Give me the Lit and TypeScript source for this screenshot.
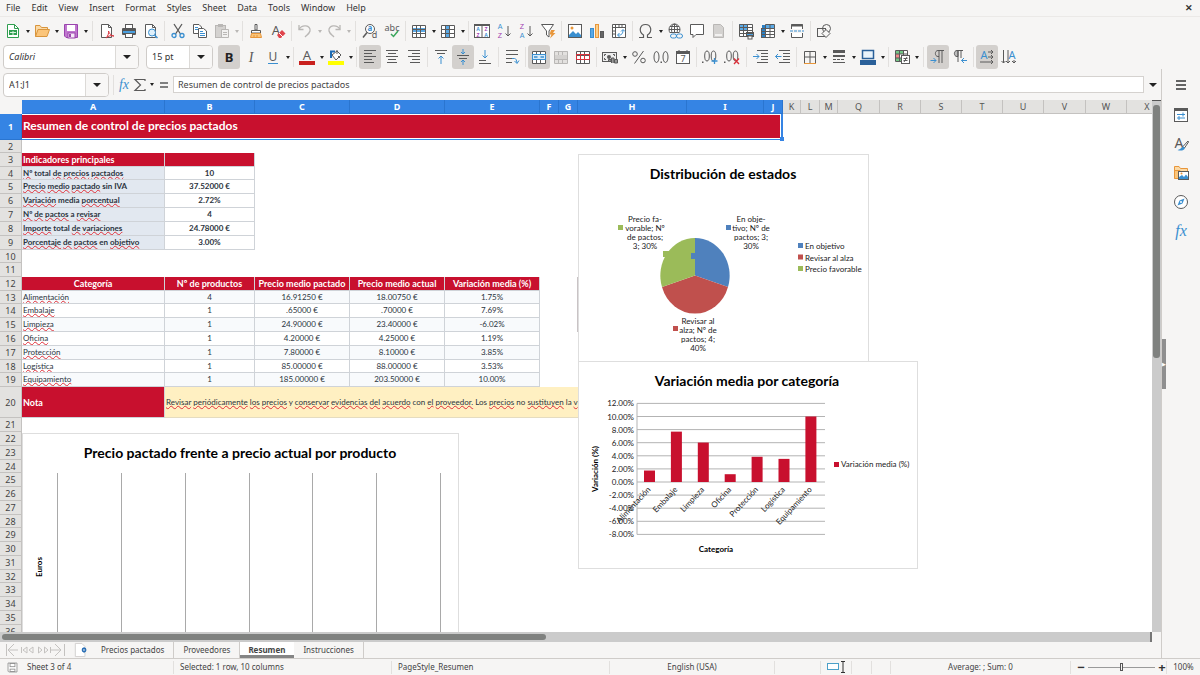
import { LitElement, html, svg, css, nothing } from "lit";
import { customElement } from "lit/decorators.js";
import { classMap } from "lit/directives/class-map.js";

const G = "#5a5a5a";
const B = "#3a8fd0";
const R = "#d9303a";
const P = "#a040b0";
const O = "#e8963a";
const L = "#b9b7b5";

const lines = (ys: number[][], color = G) =>
  ys.map(([x1, x2, y]) => svg`<path d="M${x1} ${y}H${x2}" stroke=${color} />`);

const gridBox = (c = G) => svg`<path d="M1.500 2.500H14.500V14.500H1.500ZM1.500 6.500H14.500M1.500 10.500H14.500M5.500 2.500V14.500M9.500 2.500V14.500" stroke=${c} />`;

const glyph = (t: string, x: number, y: number, size: number, color: string, weight = 400) =>
  svg`<text x=${x} y=${y} font-size=${size} font-weight=${weight} fill=${color} text-anchor="middle">${t}</text>`;

const icons: Record<string, unknown> = {
  new: svg`<path d="M2.500 1.500H9.500L13.500 5.500V14.500H2.500Z" fill="#fff" stroke="#2f9e4f"/><path d="M9.500 1.500V5.500H13.500" stroke="#2f9e4f"/><rect x="4" y="7" width="8" height="5" fill="#2f9e4f"/><path d="M5 9.500H11M8 8V12" stroke="#d5f0dc"/>`,
  open: svg`<path d="M1.500 13.500V2.500H6L7.500 4.500H13.500V6.500" fill="#fbd9a5" stroke="#d9953c"/><path d="M1.500 13.500L4 6.500H15.500L13 13.500Z" fill="#fbc57a" stroke="#d9953c"/>`,
  save: svg`<path d="M1.500 1.500H14.500V14.500H3L1.500 13Z" fill="#c077cf" stroke="#9a44ad"/><rect x="4" y="2" width="8" height="6" fill="#fff"/><rect x="5" y="10" width="7" height="5" fill="#f6e9f8" stroke="#9a44ad"/><rect x="6" y="11" width="2" height="3" fill="#9a44ad"/>`,
  pdf: svg`<path d="M2.500 1.500H9.500L12.500 4.500V14.500H2.500Z" fill="#fff" stroke=${G}/><path d="M9.500 1.500V4.500H12.500" stroke=${G}/><path d="M7 15C9 13 10 10 9.500 8C11 12 13 13 15 13C12 12 9 13 7 15Z" fill="#fff" stroke=${R}/>`,
  print: svg`<rect x="4.500" y="1.500" width="7" height="4" fill="#fff" stroke=${G}/><rect x="1" y="5" width="14" height="7" rx="1" fill="#565656"/><rect x="2" y="8" width="12" height="2" fill="#4ba0df"/><rect x="4.500" y="10.500" width="7" height="4" fill="#fff" stroke=${G}/>`,
  preview: svg`<path d="M2.500 1.500H9.500L12.500 4.500V14.500H2.500Z" fill="#fff" stroke=${G}/><path d="M9.500 1.500V4.500H12.500" stroke=${G}/><circle cx="9" cy="9.500" r="3.500" fill="#dff0fb" stroke=${B}/><path d="M11.500 12L14.500 15" stroke=${B} stroke-width="1.500"/>`,
  cut: svg`<path d="M4 1L10.500 11M12 1L5.500 11" stroke=${G} stroke-width="1.300"/><circle cx="4" cy="12.500" r="2" stroke=${B} stroke-width="1.300"/><circle cx="12" cy="12.500" r="2" stroke=${B} stroke-width="1.300"/>`,
  copy: svg`<path d="M1.500 1.500H7L9.500 4V10.500H1.500Z" fill="#fff" stroke=${G}/><path d="M3 4.500H6M3 6.500H6" stroke=${B}/><path d="M6.500 5.500H11.500L14.500 8V14.500H6.500Z" fill="#fff" stroke=${G}/><path d="M8 8.500H11M8 10.500H13M8 12.500H13" stroke=${B}/>`,
  paste: svg`<rect x="1.500" y="2.500" width="10" height="12" fill="#d4d2d0" stroke=${L}/><rect x="4" y="1" width="5" height="3" fill=${L}/><path d="M7.500 6.500H14.500V14.500H7.500Z" fill="#f2f1f0" stroke=${L}/><path d="M9 9.500H13M9 11.500H13" stroke=${L}/>`,
  brush: svg`<path d="M7 1.500H9V7H7Z" fill="#fff" stroke=${G}/><path d="M3.500 7.500H12.500V10H3.500Z" fill="#fff" stroke=${G}/><path d="M3.500 10.500H12.500L13.500 14.500H2.500Z" fill="#fbc57a" stroke=${O}/><path d="M6 12V14M9 12V14" stroke=${O}/>`,
  clear: svg`${glyph("A", 6, 12, 13, G)}<path d="M7 12L12 7L15.500 10.500L11 15H9Z" fill="#e0454d"/><path d="M9 10L13 14" stroke="#fff"/>`,
  undo: svg`<path d="M2 2V6.500H6.500" stroke=${L} stroke-width="1.300"/><path d="M2 6.500C5 1 14 2 13 8C12.500 10.500 10 12 8 14" stroke=${L} stroke-width="1.300"/>`,
  redo: svg`<path d="M14 2V6.500H9.500" stroke=${L} stroke-width="1.300"/><path d="M14 6.500C11 1 2 2 3 8C3.500 10.500 6 12 8 14" stroke=${L} stroke-width="1.300"/>`,
  find: svg`<circle cx="8" cy="6" r="4.500" fill="#fff" stroke=${G}/><path d="M5 9.500L1 14.500" stroke=${G} stroke-width="1.500"/>${glyph("a", 8, 8, 8, B, 700)}${glyph("d", 12.5, 15, 9, G)}`,
  spell: svg`${glyph("abc", 8, 8, 9, G)}<path d="M7 11L9.500 13.500L14 8" stroke="#3aa65c" stroke-width="1.500"/>`,
  row: svg`<rect x="1" y="2" width="14" height="12" fill="#fff"/><rect x="1" y="5" width="14" height="4" fill="#5aa9e6"/>${gridBox()}`,
  col: svg`<rect x="1" y="2" width="14" height="12" fill="#fff"/><rect x="5" y="2" width="5" height="13" fill="#5aa9e6"/>${gridBox()}`,
  sort: svg`<rect x="0.500" y="1.500" width="15" height="13" fill="#fff" stroke=${G}/><path d="M0 2H16" stroke=${G} stroke-width="2"/><path d="M8 2V15" stroke=${G}/><g class="letters">${glyph("A", 4, 8, 5, B, 700)}${glyph("Z", 4, 14, 5, P, 700)}${glyph("Z", 12, 8, 5, P, 700)}${glyph("A", 12, 14, 5, B, 700)}</g>`,
  az: svg`<g class="letters">${glyph("A", 4, 6, 7, B)}${glyph("Z", 4, 15, 7, P)}</g><path d="M12 3V13M9.500 10.500L12 13L14.500 10.500" stroke=${G}/>`,
  za: svg`<g class="letters">${glyph("Z", 4, 6, 7, P)}${glyph("A", 4, 15, 7, B)}</g><path d="M12 3V13M9.500 10.500L12 13L14.500 10.500" stroke=${G}/>`,
  filter: svg`<path d="M1.500 1.500H13.500L9 8V14L6.500 12V8Z" fill="#fff" stroke=${G}/><path d="M11 7H15L13 10H15.500L10 15.500L11.500 11.500H9.500Z" fill=${O}/>`,
  image: svg`<rect x="1.500" y="1.500" width="13" height="13" fill="#fff" stroke=${G}/><path d="M2 14V12L6 8L9 11L11 9L14 12V14Z" fill="#3a8fd0"/><circle cx="5" cy="5" r="1.500" fill=${O}/>`,
  chart: svg`<rect x="1.500" y="5.500" width="3" height="9" fill="#5aa9e6" stroke=${B}/><rect x="6.500" y="1.500" width="3" height="13" fill="#fbd08c" stroke=${O}/><rect x="11.500" y="8.500" width="3" height="6" fill="#666" stroke=${G}/>`,
  pivot: svg`<path d="M1.500 1.500H14.500V14.500H1.500ZM1.500 4.500H14.500M4.500 1.500V14.500M8 1.500V4.500M11 1.500V4.500M1.500 8H4.500M1.500 11H4.500" fill="#fff" stroke=${G}/><path d="M7 12C11 12.500 12 10 12 7M10 8.500L12 6.500L14 8.500M8.500 10L6.500 12L8.500 14" stroke=${B}/>`,
  omega: svg`<path d="M1 14.500H5.500V12C0 8.500 2 1.500 7.500 1.500S15 8.500 9.500 12V14.500H14" stroke=${G} stroke-width="1.200"/>`,
  link: svg`<circle cx="7.500" cy="6.500" r="5.500" stroke=${G} fill="#fff"/><path d="M2 6.500H13M7.500 1V12M3 3.500H12M3 9.500H12" stroke=${G}/><ellipse cx="7.500" cy="6.500" rx="3" ry="5.500" stroke=${G}/><rect x="3" y="10" width="13" height="6" fill="#f6f5f4"/><rect x="3.500" y="11" width="6" height="4" rx="2" stroke=${B}/><rect x="9.500" y="11" width="6" height="4" rx="2" stroke=${B}/>`,
  comment: svg`<path d="M1.500 1.500H14.500V11.500H7L4 14.500V11.500H1.500Z" fill="#fff" stroke=${G}/>`,
  header: svg`<path d="M2.500 1.500H9.500L12.500 4.500V14.500H2.500Z" fill="#d4d2d0" stroke=${L}/><rect x="4" y="11" width="7" height="2" fill="#f2f1f0"/>`,
  area: svg`<rect x="1" y="1" width="13" height="12" fill="#fff"/><rect x="1" y="1" width="9" height="7" fill="#5aa9e6"/><path d="M1.500 1.500H14.500V13.500H1.500ZM1.500 4.500H14.500M1.500 7.500H14.500M1.500 10.500H14.500M5.500 1.500V13.500M9.500 1.500V13.500" stroke=${G}/><rect x="8" y="9" width="8" height="5" fill="#565656"/><rect x="9" y="11" width="6" height="1" fill="#4ba0df"/><rect x="10" y="13" width="4" height="3" fill="#fff" stroke=${G}/>`,
  freeze: svg`<rect x="2" y="2" width="13" height="13" fill="#fff"/><rect x="2" y="2" width="13" height="4" fill="#5aa9e6"/><rect x="2" y="2" width="4" height="13" fill="#2a7fc4"/><path d="M1.500 5.500H14.500V14.500M5.500 1.500H14.500V5.500M1.500 8.500H14.500M1.500 11.500H14.500M1.500 14.500H14.500M5.500 1.500V14.500M10 1.500V14.500M1.500 5V15" stroke=${G}/>`,
  split: svg`<path d="M2.500 6V1.500H13.500V6M2.500 10V14.500H13.500V10" fill="#fff" stroke=${G}/><path d="M2 2.500H14" stroke=${G} stroke-width="2"/><path d="M1 8H15" stroke=${B} stroke-dasharray="3 1"/>`,
  shapes: svg`<rect x="1.500" y="5.500" width="8" height="8" fill="#f6f5f4" stroke=${G}/><circle cx="10.500" cy="5.500" r="4" stroke=${G}/><path d="M10 6.500L14 10.500L10 14.500L6 10.500Z" fill="#f6f5f4" stroke=${G}/>`,
  bold: glyph("B", 8, 13, 13, "#222", 700),
  italic: svg`<text class="serif" x="8" y="13" font-size="14" font-style="italic" fill=${G} text-anchor="middle">I</text>`,
  underline: svg`${glyph("U", 8, 12, 12, G)}<path d="M3 14.500H13" stroke=${B}/>`,
  fontcolor: svg`${glyph("A", 8, 11, 13, G)}<rect x="0" y="12" width="16" height="4" fill="#c9211e"/>`,
  fill: svg`<path d="M4 6L9 2L13 6L8 11Z" fill="#fff" stroke=${G}/><path d="M9 5V1M10 7L12 9" stroke=${G}/><path d="M3 2V9M2 2.500H7" stroke="#1f6db5" stroke-width="2"/><rect x="0" y="12" width="16" height="4" fill="#ffff00"/>`,
  left: lines([[2, 14, 1.5], [2, 10, 4.5], [2, 14, 7.5], [2, 10, 10.5], [2, 12, 13.5]]),
  center: lines([[2, 14, 1.5], [4, 12, 4.5], [2, 14, 7.5], [4, 12, 10.5], [3, 13, 13.5]]),
  right: lines([[2, 14, 1.5], [6, 14, 4.5], [2, 14, 7.5], [6, 14, 10.5], [4, 14, 13.5]]),
  top: svg`${lines([[2, 14, 1.5], [4, 12, 4.5]])}<path d="M8 15V7M5.500 9.500L8 7L10.500 9.500" stroke=${B}/>`,
  middle: svg`${lines([[2, 14, 6.5], [4, 12, 9.5]])}<path d="M8 0V5M6 3L8 5L10 3M8 16V11M6 13L8 11L10 13" stroke=${B}/>`,
  bottom: svg`${lines([[2, 9, 11.5], [2, 14, 14.5]])}<path d="M8 1V9M5.500 6.500L8 9L10.500 6.500" stroke=${B}/>`,
  wrap: svg`${lines([[2, 14, 1.5], [2, 14, 5.5], [2, 8, 9.5], [2, 8, 13.5]])}<path d="M8 9.500H10.500C12 9.500 12.500 11 13 14M10.500 12L13 14.500L15 11.500" stroke=${B}/>`,
  merge: svg`<rect x="1" y="2" width="14" height="12" fill="#fff"/>${gridBox()}<rect x="1.500" y="5.500" width="13" height="5" fill="#d7ebf9" stroke=${B}/><path d="M3 8H6.500M13 8H9.500" stroke=${B} stroke-width="1.500"/>`,
  merge2: svg`<rect x="1" y="2" width="14" height="12" fill="#e3e1df"/>${gridBox(L)}<rect x="2" y="6" width="12" height="4" fill="#d4d2d0"/>`,
  unmerge: svg`<rect x="1" y="2" width="14" height="12" fill="#fff"/>${gridBox()}<path d="M1.500 5.500H14.500V10.500H1.500ZM5.500 5.500V10.500M9.500 5.500V10.500" stroke=${R}/>`,
  currency: svg`<rect x="0.500" y="3.500" width="14" height="9" fill="#eee" stroke=${G}/><circle cx="7" cy="8" r="2" fill=${G}/><path d="M2.500 7V5.500H4M2.500 9V10.500H4M11 5.500H12.500V7" stroke=${G}/><path d="M6.500 12V10.500H9V12M9.500 14V9H12V14M12.500 14V10.500H15.500V14Z" fill="#999" stroke=${G}/>`,
  percent: svg`<circle cx="4" cy="5" r="2.300" stroke=${G}/><circle cx="12" cy="11.500" r="2.300" stroke=${G}/><path d="M12.500 2L3.500 14.500" stroke=${G}/>`,
  number: svg`<ellipse cx="3.500" cy="8" rx="2.500" ry="5.500" stroke=${G}/><ellipse cx="12.500" cy="8" rx="2.500" ry="5.500" stroke=${G}/><rect x="7.500" y="12.500" width="1.500" height="1.500" fill=${G}/>`,
  date: svg`<rect x="1.500" y="2.500" width="13" height="12" fill="#fff" stroke=${G}/><path d="M1 4H15" stroke=${G} stroke-width="2"/><path d="M4 1V3M12 1V3" stroke=${G}/>${glyph("7", 8, 13, 9, G)}`,
  addDec: svg`<rect x="0" y="12.500" width="1.500" height="1.500" fill=${G}/><ellipse cx="5" cy="7" rx="2.300" ry="5" stroke=${G}/><ellipse cx="11.500" cy="7" rx="2.300" ry="5" stroke=${G}/><path d="M9.500 12H15.500M12.500 9V15" stroke=${B} stroke-width="1.300"/>`,
  delDec: svg`<rect x="0" y="12.500" width="1.500" height="1.500" fill=${G}/><ellipse cx="5" cy="7" rx="2.300" ry="5" stroke=${G}/><ellipse cx="11.500" cy="7" rx="2.300" ry="5" stroke=${G}/><path d="M10 9.500L15 15M15 9.500L10 15" stroke=${R} stroke-width="1.300"/>`,
  indent: svg`${lines([[4, 15, 1.5], [8, 15, 4.5], [8, 15, 7.5], [8, 15, 10.5], [4, 15, 13.5]])}<path d="M0 7.500H6M3.500 5L6 7.500L3.500 10" stroke=${B}/>`,
  outdent: svg`${lines([[4, 15, 1.5], [8, 15, 4.5], [8, 15, 7.5], [8, 15, 10.5], [4, 15, 13.5]])}<path d="M0.500 7.500H6.500M3 5L0.500 7.500L3 10" stroke=${B}/>`,
  borders: svg`<path d="M2.500 14V2.500H13.500V14M8 2.500V14M2.500 8H13.500" stroke=${G}/><path d="M2 14.500H14" stroke=${O}/>`,
  linestyle: svg`<path d="M2 2.500H14" stroke=${G} stroke-width="3"/><path d="M2 7H14" stroke=${G} stroke-width="2"/><path d="M2 10.500H14" stroke=${G} stroke-dasharray="3 1"/><path d="M2 13.500H14" stroke=${G}/>`,
  bordercolor: svg`<rect x="2.500" y="1.500" width="11" height="8" fill="#e9f3fb" stroke="#2a6099" stroke-width="1.500"/><rect x="0" y="11" width="16" height="5" fill="#2a6099"/>`,
  cond: svg`<rect x="1" y="1" width="13" height="12" fill="#fff"/><rect x="2" y="2" width="8" height="3" fill="#74c686"/><rect x="2" y="5" width="4" height="4" fill="#ef8a8a"/><rect x="2" y="9" width="5" height="4" fill="#74c686"/><path d="M1.500 1.500H13.500V6M1.500 1.500V12.500H7M1.500 5H13.500M1.500 9H7M5.500 1.500V12.500M9.500 1.500V6" stroke=${G}/><rect x="7.500" y="6.500" width="8" height="8" fill="#fff" stroke=${G}/><path d="M9.500 9.500H13.500M9.500 11.500H13.500M13 8L10 13" stroke=${G}/>`,
  ltr: svg`<path d="M14 1.500H8C4.500 1.500 4.500 7.500 8 7.500H9M9 1.500V14M12 1.500V14" stroke=${G}/><path d="M0.500 11.500H6M3.500 9L6 11.500L3.500 14" stroke=${B}/>`,
  rtl: svg`<path d="M11 1.500H5C1.500 1.500 1.500 7.500 5 7.500H6V1.500" fill="#bbb" stroke=${G}/><path d="M6 1.500V13M9 1.500V9" stroke=${G}/><path d="M9.500 11.500H15M12 9L9.500 11.500L12 14" stroke=${B}/>`,
  horiz: svg`${glyph("A", 5, 10, 11, B)}<path d="M9 3H14M12 1L14 3L12 5M9 8H14M12 6L14 8L12 10M1 13H14M12 11L14 13L12 15" stroke=${G}/>`,
  vert: svg`${glyph("A", 11, 10, 11, B)}<path d="M2.500 1V14M0.500 12L2.500 14L4.500 12M7 1V14M5 12L7 14L9 12M13 11V14M11 12L13 14L15 12" stroke=${G}/>`,
  fx: svg`<text class="serif" x="8" y="12" font-size="14" font-style="italic" fill=${B} text-anchor="middle">fx</text>`,
  sum: svg`<path d="M13 4V2.500H3L8.500 8L3 13.500H13V12" stroke=${G} stroke-width="1.200"/>`,
  equals: svg`<path d="M4 6H12M4 10H12" stroke=${G} stroke-width="1.500"/>`,
  burger: svg`<path d="M3 4H13M3 8H13M3 12H13" stroke="#333" stroke-width="1.500"/>`,
  props: svg`<rect x="1.500" y="1.500" width="13" height="13" fill="#fff" stroke=${G}/><path d="M1 3H15" stroke=${G} stroke-width="2"/><path d="M4 7.500H12M10 5.500V9.500M4 11H12M6 9V13" stroke=${B}/>`,
  styles: svg`${glyph("A", 6, 12, 14, G)}<path d="M15 5L10 10.500L11.500 12L15.500 6Z" fill="#fff" stroke=${G}/><path d="M10 10.500L12 12C11 15 7 15 4.500 14C7 14 8 11.500 10 10.500Z" fill=${B}/>`,
  gallery: svg`<path d="M1.500 13.500V1.500H6L7.500 3.500H14.500V6" fill="#fbd9a5" stroke=${O}/><path d="M1.500 13.500V5.500H7V13.500Z" fill="#fbc57a" stroke=${O}/><rect x="5.500" y="6.500" width="10" height="8" fill="#fff" stroke=${G}/><path d="M6 14V12L9 10L11 12L13 9.500L15 12V14Z" fill=${B}/><circle cx="8.500" cy="8.500" r="1" fill=${O}/>`,
  navigator: svg`<circle cx="8" cy="8" r="6.500" fill="#fff" stroke=${G}/><path d="M11.500 4.500L9.500 9.500L4.500 11.500L6.500 6.500Z" fill="#3a8fd0"/><circle cx="8" cy="8" r="1" fill="#fff"/>`,
  functions: svg`<text class="serif" x="8" y="13" font-size="16" font-style="italic" fill=${B} text-anchor="middle">fx</text>`,
  disk: svg`<path d="M2.500 2.500H13.500V13.500H3.500L2.500 12.500Z" fill="#fff" stroke="#8a8a8a"/><rect x="5" y="3" width="6" height="4" stroke="#8a8a8a"/><rect x="5" y="10" width="6" height="3" stroke="#8a8a8a"/>`,
  addSheet: svg`<path d="M1.500 0.500H9L12.500 4V15.500H1.500Z" fill="#fff" stroke="#cfcdcb"/><circle cx="11.500" cy="8" r="2" fill="#fff" stroke="#2a6fb5" stroke-width="1.500"/><path d="M11.500 5V11" stroke="#2a6fb5"/>`,
};

const icon = (name: string) =>
  html`<svg class="icon" viewBox="0 0 16 16" fill="none" aria-hidden="true">${icons[name]}</svg>`;

/* A tool entry is [icon, label, flags]; flags: d = has a drop-down, a = pressed, x = disabled. */
type Tool = [string, string, string?];
const mainTools: Tool[] = [
  ["new", "New", "d"], ["open", "Open", "d"], ["save", "Save", "d"], ["|", "wide"],
  ["pdf", "Export as PDF"], ["print", "Print"], ["preview", "Print preview"], ["|", ""],
  ["cut", "Cut"], ["copy", "Copy"], ["paste", "Paste", "dx"], ["|", ""],
  ["brush", "Clone formatting"], ["clear", "Clear formatting"], ["|", ""],
  ["undo", "Undo", "dx"], ["redo", "Redo", "dx"], ["|", "wide"],
  ["find", "Find and replace"], ["spell", "Spelling"], ["|", ""],
  ["row", "Row", "d"], ["col", "Column", "d"], ["|", ""],
  ["sort", "Sort"], ["az", "Sort ascending"], ["za", "Sort descending"], ["filter", "AutoFilter"], ["|", ""],
  ["image", "Insert image"], ["chart", "Insert chart"], ["pivot", "Pivot table"], ["|", ""],
  ["omega", "Special character", "d"], ["link", "Hyperlink"], ["comment", "Comment"], ["header", "Headers and footers", "x"], ["|", ""],
  ["area", "Print area"], ["freeze", "Freeze rows and columns", "d"], ["split", "Split window"], ["|", ""],
  ["shapes", "Draw functions"],
];
const formatTools: Tool[] = [
  ["bold", "Bold", "a"], ["italic", "Italic"], ["underline", "Underline", "d"], ["|", ""],
  ["fontcolor", "Font color", "d"], ["fill", "Background color", "d"], ["|", ""],
  ["left", "Align left", "a"], ["center", "Center"], ["right", "Align right"], ["|", ""],
  ["top", "Align top"], ["middle", "Center vertically", "a"], ["bottom", "Align bottom"], ["|", ""],
  ["wrap", "Wrap text"], ["|", ""],
  ["merge", "Merge and center", "a"], ["merge2", "Merge cells", "x"], ["unmerge", "Unmerge cells"], ["|", ""],
  ["currency", "Currency", "d"], ["percent", "Percent"], ["number", "Number"], ["date", "Date"], ["|", ""],
  ["addDec", "Add decimal place"], ["delDec", "Delete decimal place"], ["|", "wide"],
  ["indent", "Increase indent"], ["outdent", "Decrease indent"], ["|", ""],
  ["borders", "Borders", "d"], ["linestyle", "Border style", "d"], ["bordercolor", "Border color", "d"], ["|", ""],
  ["cond", "Conditional formatting", "d"], ["|", "wide"],
  ["ltr", "Left-to-right", "a"], ["rtl", "Right-to-left"], ["|", ""],
  ["horiz", "Text direction horizontal", "a"], ["vert", "Text direction vertical"],
];

const columns: [string, number][] = [
  ["A", 143], ["B", 90], ["C", 95], ["D", 95], ["E", 95], ["F", 19], ["G", 19], ["H", 109], ["I", 77], ["J", 19],
  ["K", 18], ["L", 19], ["M", 18], ["Q", 42], ["R", 41], ["S", 41], ["T", 41], ["U", 41], ["V", 42], ["W", 41], ["X", 41],
];
const rowHeights = [
  26, 13, 14, 13, 14, 14, 14, 14, 14, 13, 14, 14, 13, 14, 14, 14, 14, 13,
  14, 31, 14, 14, 14, 13, 14, 14, 14, 13, 14, 14, 14, 13, 14, 14, 14, 14,
];

/* Words between underscores carry the spelling mark. */
const indicators: [string, string][] = [
  ["_Nº_ total _de_ _precios_ _pactados_", "10"],
  ["_Precio_ _medio_ _pactado_ sin IVA", "37.52000 €"],
  ["_Variación_ media _porcentual_", "2.72%"],
  ["_Nº_ _de_ _pactos_ a _revisar_", "4"],
  ["_Importe_ total _de_ _variaciones_", "24.78000 €"],
  ["_Porcentaje_ _de_ _pactos_ en _objetivo_", "3.00%"],
];
const categoryHead = ["Categoría", "Nº de productos", "Precio medio pactado", "Precio medio actual", "Variación media (%)"];
const categories: [string, string, string, string, string][] = [
  ["Alimentación", "4", "16.91250 €", "18.00750 €", "1.75%"],
  ["Embalaje", "1", ".65000 €", ".70000 €", "7.69%"],
  ["Limpieza", "1", "24.90000 €", "23.40000 €", "-6.02%"],
  ["Oficina", "1", "4.20000 €", "4.25000 €", "1.19%"],
  ["Protección", "1", "7.80000 €", "8.10000 €", "3.85%"],
  ["Logística", "1", "85.00000 €", "88.00000 €", "3.53%"],
  ["Equipamiento", "1", "185.00000 €", "203.50000 €", "10.00%"],
];
const note =
  "_Revisar_ _periódicamente_ _los_ _precios_ y _conservar_ _evidencias_ _del_ _acuerdo_ con _el_ _proveedor._ Los _precios_ no _sustituyen_ la _v_";

const spelled = (text: string) =>
  text.split("_").map((part, i) => (i % 2 ? html`<span class="typo">${part}</span>` : part));

@customElement("app-root")
export class AppRoot extends LitElement {
  static styles = css`
    :host {
      display: flex;
      flex-direction: column;
      height: 100vh;
      overflow: hidden;
      background: #f6f5f4;
      color: #333;
      font: 9px/12px "Noto Sans", "Open Sans", sans-serif;
    }
    * { box-sizing: border-box; }
    button, input {
      font: inherit;
      color: inherit;
      border: 0;
      background: none;
      padding: 0;
      margin: 0;
      min-width: 0;
    }
    figure { margin: 0; }
    .icon { width: 16px; height: 16px; display: block; overflow: visible; }
    .icon text { font-family: "Noto Sans", sans-serif; }
    .icon .letters text { font-family: "Liberation Sans", sans-serif; }
    .icon text.serif { font-family: "Liberation Serif", serif; }
    .menubar { display: flex; align-items: center; gap: 1px; height: 17px; border-bottom: 1px solid #ebe9e7; padding: 0 7px 0 1px; }
    .menubar button { padding: 0 5px; line-height: 16px; }
    .menubar .close { margin-left: auto; padding: 0; font-size: 9px; font-weight: 700; }
    .bar { display: flex; align-items: center; flex: none; }
    .bar.main { height: 28px; padding-left: 2px; }
    .bar.format { height: 24px; padding-left: 3px; }
    .tool { display: flex; align-items: center; justify-content: center; width: 22px; height: 24px; border-radius: 3px; flex: none; }
    .tool.on { background: #d3d0cd; }
    .caret { display: flex; align-items: center; justify-content: center; width: 7px; height: 20px; flex: none; }
    .caret::after, .drop::after { content: ""; border: 2px solid transparent; border-top: 3px solid #222; border-bottom: 0; }
    .caret.off::after { border-top-color: #b9b7b5; }
    .sep { width: 1px; height: 20px; background: #e2e0de; margin: 0 2px; flex: none; }
    .sep.wide { margin: 0 3px; }
    .combo { display: flex; height: 24px; border: 1px solid #cfccc9; border-radius: 4px; background: #fff; flex: none; overflow: hidden; }
    .combo input { flex: 1; padding-left: 5px; }
    .combo .drop { width: 23px; border-left: 1px solid #dcdad7; background: #f8f7f6; }
    .drop { display: flex; align-items: center; justify-content: center; }
    .drop::after { border-width: 4px 4px 0 4px; }
    .fontname { width: 136px; margin-right: 7px; }
    .fontname input { font-style: italic; }
    .fontsize { width: 67px; margin-right: 5px; }
    .cellname { width: 106px; }
    .body { display: flex; flex: 1; min-height: 0; }
    .work { display: flex; flex-direction: column; flex: 1; min-width: 0; }
    .formula { display: flex; align-items: center; height: 31px; padding-left: 3px; flex: none; }
    .formula .tool { width: 16px; }
    .formula .sep { margin: 0 2px 0 4px; }
    .formula .caret { width: 6px; margin-left: 1px; }
    .formula .eq { width: 18px; }
    .line { flex: 1; height: 17px; border: 1px solid #d5d2cf; background: #fff; padding-left: 4px; color: #444; }
    .formula .expand { width: 17px; height: 20px; }
    .view { display: flex; flex: 1; min-height: 0; }
    .sheet { position: relative; flex: 1; min-width: 0; overflow: hidden; background: #fff; }
    table { width: 0; table-layout: fixed; border-collapse: separate; border-spacing: 0; }
    th, td { padding: 0; overflow: hidden; white-space: nowrap; font-weight: 400; line-height: 11px; }
    thead th { height: 14px; background: #e3e2e0; border-right: 1px solid #c4c2c0; border-bottom: 1px solid #c4c2c0; color: #555; }
    thead th.corner { background: #f6f5f4; border-color: #f6f5f4; }
    thead th.sel, tbody th.sel { background: #3584e4; color: #fff; font-weight: 700; border-color: #2a75d0; }
    tbody th { background: #e3e2e0; border-right: 1px solid #c4c2c0; border-bottom: 1px solid #c4c2c0; color: #444; }
    td { font-family: Lato, sans-serif; font-size: 8px; text-align: center; color: #2b3440; }
    td.cell { border-right: 1px solid #cfd3d8; border-bottom: 1px solid #cfd3d8; }
    td.name { text-align: left; padding-left: 1px; }
    td.strong { font-weight: 700; }
    td.soft { background: #e2e8f0; }
    td.tint { background: #f8fafc; }
    td.red { background: #c8102e; color: #fff; font-weight: 700; font-size: 9px; }
    td.title { position: relative; overflow: visible; background: #c8102e; color: #fff; font-weight: 700; font-size: 12px; line-height: 16px; text-align: left; padding: 0 0 2px 1px; }
    td.note { background: #fff0c2; text-align: left; padding-left: 1px; border-bottom: 1px solid #e5dcc0; }
    td.edge { border-right: 1px solid #c9c3c5; }
    .selection { position: absolute; inset: 0; border-right: 2px solid #3584e4; border-bottom: 1px solid #3584e4; box-shadow: inset 0 1px #fff, inset -1px -1px #fff; }
    .handle { position: absolute; right: -1px; bottom: -1px; width: 4px; height: 4px; background: #3584e4; }
    .typo { text-decoration: underline wavy #e0303a 1px; text-underline-offset: 0px; text-decoration-skip-ink: none; }
    .chart { position: absolute; background: #fff; border: 1px solid #dedede; }
    .chart svg { display: block; width: 100%; height: 100%; }
    .chart text { font-family: Lato, sans-serif; font-size: 8px; fill: #1a1a1a; }
    .chart .heading { font-size: 14px; font-weight: 700; fill: #000; }
    .chart .axis { font-weight: 700; fill: #000; }
    .pie { left: 578px; top: 54px; width: 291px; height: 230px; }
    .bars { left: 578px; top: 261px; width: 340px; height: 208px; }
    .prices { left: 22px; top: 333px; width: 437px; height: 240px; }
    .vscroll { width: 9px; background: #cbcbcb; padding: 4px 1px 0 1px; border-top: 1px solid #555; flex: none; }
    .vthumb { height: 48%; border-radius: 3px; background: #7f817f; }
    .hscroll { height: 10px; margin-right: 9px; background: #cbcbcb; padding: 2px; border-right: 2px solid #777; flex: none; }
    .hthumb { height: 6px; width: 47.5%; border-radius: 3px; background: #7f817f; }
    .tabs { display: flex; height: 16px; align-items: stretch; padding-left: 6px; flex: none; }
    .tabs .nav { display: flex; align-items: center; width: 60px; }
    .nav svg { width: 60px; height: 14px; }
    .tabs .add { display: flex; align-items: center; width: 26px; padding-left: 8px; }
    .add .icon { width: 14px; height: 14px; }
    .tab { padding: 0 9px; border-right: 1px solid #cfccc9; font-size: 8px; color: #444; }
    .tab.on { background: #fff; font-weight: 700; border-bottom: 3px solid #858585; border-right: 0; padding: 2px 9px 0 8px; }
    .side { display: flex; flex-direction: column; align-items: center; gap: 5px; width: 39px; padding-top: 4px; border-left: 1px solid #cfccc9; flex: none; position: relative; }
    .side .burger { margin-bottom: 1px; }
    .grip { position: absolute; left: 0; top: 270px; width: 4px; height: 50px; background: #8f8f8f; color: #fff; font-size: 5px; line-height: 5px; }
    .status {
      display: grid;
      grid-template-columns: 174fr 218fr 218fr 165fr 46fr 31fr 20fr 19fr 180fr 96fr 33fr;
      align-items: center;
      height: 17px;
      border-top: 1px solid #cfccc9;
      font-size: 8px;
      color: #444;
      flex: none;
    }
    .status > * { display: flex; align-items: center; height: 13px; border-right: 1px solid #e2e0de; padding-left: 6px; white-space: nowrap; min-width: 0; }
    .status > .mid { justify-content: center; padding: 0; }
    .status > :last-child { border: 0; }
    .status .icon { width: 13px; height: 13px; margin-right: 8px; }
    .mode { display: block; width: 18px; height: 12px; }
    .zoom button { width: 8px; font-size: 13px; font-weight: 700; line-height: 10px; color: #333; flex: none; }
    .zoom input { appearance: none; flex: 1; height: 10px; margin: 0 3px; background: linear-gradient(#9a9a9a, #9a9a9a) center / 100% 1px no-repeat; }
    .zoom input::-webkit-slider-thumb { appearance: none; width: 3px; height: 8px; background: #f6f5f4; border: 1px solid #555; }
  `;

  private tool([name, label, flags = ""]: Tool) {
    if (name === "|") return html`<span class=${classMap({ sep: true, wide: label === "wide" })}></span>`;
    const off = flags.includes("x");
    return html`<button class=${classMap({ tool: true, on: flags.includes("a") })} aria-label=${label} title=${label}
        ?disabled=${off} aria-pressed=${flags.includes("a") ? "true" : nothing}>${icon(name)}</button>
      ${flags.includes("d")
        ? html`<button class=${classMap({ caret: true, off })} aria-label="${label} options" ?disabled=${off}></button>`
        : nothing}`;
  }

  private combo(kind: string, label: string, value: string) {
    return html`<span class="combo ${kind}">
      <input type="text" aria-label=${label} .value=${value} />
      <button class="drop" aria-label="${label} list"></button>
    </span>`;
  }

  private cells(row: number) {
    const blank = (n: number) => Array.from({ length: n }, () => html`<td></td>`);
    const edge = (from: number) => columns.slice(from).map(([c]) => html`<td class=${c === "G" ? "edge" : ""}></td>`);
    const total = columns.length;
    if (row === 1)
      return html`<td class="title" colspan="10">Resumen de control de precios pactados
        <span class="selection"></span><span class="handle"></span></td>${blank(total - 10)}`;
    if (row === 3)
      return html`<td class="cell red name">Indicadores principales</td><td class="cell red"></td>${blank(total - 2)}`;
    if (row >= 4 && row <= 9) {
      const [label, value] = indicators[row - 4];
      return html`<td class="cell soft strong name">${spelled(label)}</td><td class="cell strong">${value}</td>${blank(total - 2)}`;
    }
    if (row === 12) return html`${categoryHead.map((h) => html`<td class="cell red">${h}</td>`)}${edge(5)}`;
    if (row >= 13 && row <= 19) {
      const tint = row % 2 === 1;
      return html`${categories[row - 13].map((v, i) => html`<td class=${classMap({ cell: true, tint, name: i === 0 })}>
        ${i === 0 ? html`<span class="typo">${v}</span>` : v}</td>`)}${row < 16 ? edge(5) : blank(total - 5)}`;
    }
    if (row === 20)
      return html`<td class="cell red name">Nota</td><td class="note" colspan="6">${spelled(note)}</td>${blank(total - 7)}`;
    return blank(total);
  }

  private table() {
    return html`<table>
      <colgroup><col style="width:22px" />${columns.map(([, w]) => html`<col style="width:${w}px" />`)}</colgroup>
      <thead><tr><th class="corner"></th>
        ${columns.map(([c], i) => html`<th scope="col" class=${i < 10 ? "sel" : ""}>${c}</th>`)}</tr></thead>
      <tbody>${rowHeights.map((h, i) => html`<tr style="height:${h}px">
        <th scope="row" class=${i === 0 ? "sel" : ""}>${i + 1}</th>${this.cells(i + 1)}</tr>`)}</tbody>
    </table>`;
  }

  private multiline(rows: string[], x: number, y: number) {
    return rows.map((t, i) => svg`<text x=${x} y=${y + i * 9} text-anchor="middle">${t}</text>`);
  }

  private pieChart() {
    const legend: [string, string][] = [["En objetivo", "#4f81bd"], ["Revisar al alza", "#c0504d"], ["Precio favorable", "#9bbb59"]];
    return html`<figure class="chart pie"><svg viewBox="0 0 289 228" role="img" aria-label="Distribución de estados">
      <text class="heading" x="144" y="24" text-anchor="middle">Distribución de estados</text>
      <path d="M116 120.500V83A34.500 37.500 0 0 1 149 132Z" fill="#4f81bd" />
      <path d="M116 120.500L149 132A34.500 37.500 0 0 1 83 132Z" fill="#c0504d" />
      <path d="M116 120.500L83 132A34.500 37.500 0 0 1 116 83Z" fill="#9bbb59" />
      <rect x="84" y="96" width="6" height="6" fill="#9bbb59" />
      <rect x="112" y="98" width="5" height="6" fill="#4f81bd" />
      <rect x="39" y="70" width="5" height="5" fill="#9bbb59" />
      ${this.multiline(["Precio fa-", "vorable; Nº", "de pactos;", "3; 30%"], 66, 67)}
      <rect x="147" y="70" width="5" height="5" fill="#4f81bd" />
      ${this.multiline(["En obje-", "tivo; Nº de", "pactos; 3;", "30%"], 172, 67)}
      <rect x="94" y="171" width="5" height="5" fill="#c0504d" />
      ${this.multiline(["Revisar al", "alza; Nº de", "pactos; 4;", "40%"], 119, 169)}
      ${legend.map(([t, c], i) => svg`<rect x="219" y=${88 + i * 11.5} width="5" height="5" fill=${c} />
        <text x="226" y=${94 + i * 11.5}>${t}</text>`)}
    </svg></figure>`;
  }

  private barChart() {
    const zero = 120;
    const step = 13.1;
    const ticks = Array.from({ length: 11 }, (_, i) => 12 - i * 2);
    return html`<figure class="chart bars"><svg viewBox="0 0 338 206" role="img" aria-label="Variación media por categoría">
      <text class="heading" x="168" y="24" text-anchor="middle">Variación media por categoría</text>
      ${ticks.map((t) => svg`<path d="M58 ${zero - (t / 2) * step}H246" stroke="#b3b3b3" />
        <text x="55" y=${zero + 3 - (t / 2) * step} text-anchor="end">${t.toFixed(2)}%</text>`)}
      <path d="M58 ${zero - 6 * step}V${zero + 4 * step}" stroke="#b3b3b3" />
      ${categories.map((c, i) => {
        const h = (Math.abs(parseFloat(c[4])) / 2) * step;
        const x = 65 + i * 26.9;
        return svg`<rect x=${x} y=${zero - h} width="11" height=${h} fill="#c8102e" />
          <text x=${x + 7} y=${zero + 8} text-anchor="end" transform="rotate(-47 ${x + 7} ${zero + 8})">${c[0]}</text>`;
      })}
      <text class="axis" x="19" y="107" text-anchor="middle" transform="rotate(-90 19 107)">Variación (%)</text>
      <text class="axis" x="137" y="190" text-anchor="middle">Categoría</text>
      <rect x="255" y="100" width="5" height="5" fill="#c8102e" />
      <text x="262" y="105">Variación media (%)</text>
    </svg></figure>`;
  }

  private priceChart() {
    return html`<figure class="chart prices"><svg viewBox="0 0 435 238" role="img" aria-label="Precio pactado frente a precio actual por producto">
      <text class="heading" x="217" y="24" text-anchor="middle">Precio pactado frente a precio actual por producto</text>
      ${[34, 98, 162, 226, 289, 353, 417].map((x) => svg`<path d="M${x}.5 39V238" stroke="#a9a9a9" />`)}
      <text class="axis" x="19" y="133" text-anchor="middle" transform="rotate(-90 19 133)">Euros</text>
    </svg></figure>`;
  }

  render() {
    return html`
      <nav class="menubar" aria-label="Menu">
        ${["File", "Edit", "View", "Insert", "Format", "Styles", "Sheet", "Data", "Tools", "Window", "Help"].map((m) => html`<button>${m}</button>`)}
        <button class="close" aria-label="Close document">✕</button>
      </nav>
      <div class="bar main" role="toolbar" aria-label="Standard">${mainTools.map((t) => this.tool(t))}</div>
      <div class="bar format" role="toolbar" aria-label="Formatting">
        ${this.combo("fontname", "Font name", "Calibri")}${this.combo("fontsize", "Font size", "15 pt")}
        ${formatTools.map((t) => this.tool(t))}
      </div>
      <div class="body">
        <main class="work">
          <div class="formula">
            ${this.combo("cellname", "Name box", "A1:J1")}
            <span class="sep"></span>
            <button class="tool" aria-label="Function wizard">${icon("fx")}</button>
            <button class="tool" aria-label="Select function">${icon("sum")}</button>
            <button class="caret" aria-label="Function options"></button>
            <button class="tool eq" aria-label="Formula">${icon("equals")}</button>
            <input class="line" type="text" aria-label="Input line" .value=${"Resumen de control de precios pactados"} />
            <button class="drop expand" aria-label="Expand formula bar"></button>
          </div>
          <div class="view">
            <div class="sheet">${this.table()}${this.pieChart()}${this.barChart()}${this.priceChart()}</div>
            <div class="vscroll"><div class="vthumb"></div></div>
          </div>
          <div class="hscroll"><div class="hthumb"></div></div>
          <div class="tabs">
            <span class="nav"><svg viewBox="0 0 60 14" fill="none" stroke="#c4c2c0" aria-hidden="true">
              <path d="M0.500 1V13M8 1L2 7L8 13M2 7H12M15.500 4V10M21 4L17 7L21 10ZM27 4L23 7L27 10ZM32.500 4V10L36 7ZM38.500 4V10L42 7ZM44.500 4V10M49 1L55 7L49 13M45 7H55M58.500 1V13" />
            </svg></span>
            <button class="add" aria-label="Add sheet">${icon("addSheet")}</button>
            ${["Precios pactados", "Proveedores", "Resumen", "Instrucciones"].map((t) => html`<button class=${classMap({ tab: true, on: t === "Resumen" })}>${t}</button>`)}
          </div>
        </main>
        <aside class="side">
          <button class="tool burger" aria-label="Sidebar settings">${icon("burger")}</button>
          <button class="tool" aria-label="Properties">${icon("props")}</button>
          <button class="tool" aria-label="Styles">${icon("styles")}</button>
          <button class="tool" aria-label="Gallery">${icon("gallery")}</button>
          <button class="tool" aria-label="Navigator">${icon("navigator")}</button>
          <button class="tool" aria-label="Functions">${icon("functions")}</button>
          <button class="grip" aria-label="Hide sidebar">▶</button>
        </aside>
      </div>
      <footer class="status">
        <span>${icon("disk")}Sheet 3 of 4</span>
        <span>Selected: 1 row, 10 columns</span>
        <span>PageStyle_Resumen</span>
        <span class="mid">English (USA)</span>
        <span></span>
        <span><svg class="mode" viewBox="0 0 18 12" fill="none" aria-hidden="true">
          <rect x="0.500" y="2.500" width="11" height="6" fill="#fff" stroke="#4ba0c8" />
          <path d="M14 0.500H18M14 11.500H18M16 0.500V11.500" stroke="#333" /></svg></span>
        <span></span><span></span>
        <span class="mid">Average: ; Sum: 0</span>
        <span class="zoom"><button aria-label="Zoom out">−</button>
          <input type="range" min="0" max="100" value="50" aria-label="Zoom" />
          <button aria-label="Zoom in">+</button></span>
        <span class="mid">100%</span>
      </footer>
    `;
  }
}
